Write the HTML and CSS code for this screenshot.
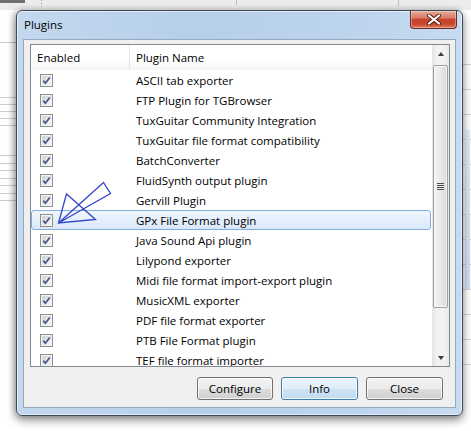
FILE: index.html
```html
<!DOCTYPE html>
<html lang="en">
<head>
    <meta charset="UTF-8">
    <meta name="viewport" content="width=device-width, initial-scale=1.0">
    <title>Plugins</title>
    <link rel="stylesheet" href="styles.css">
</head>
<body>
    <div class="dialog">
        <div class="titlebar">
            <span class="title">Plugins</span>
            <div class="close-btn">
                <svg width="16" height="11" viewBox="0 0 16 11">
                    <path d="M3 1.5 L13 9.5 M13 1.5 L3 9.5" stroke="#5a1c12" stroke-width="4" stroke-linecap="round"/>
                    <path d="M3 1.5 L13 9.5 M13 1.5 L3 9.5" stroke="#fff" stroke-width="2.2" stroke-linecap="round"/>
                </svg>
            </div>
        </div>
        <div class="client">
            <div class="list">
                <div class="list-body">
                    <div class="header">
                        <div class="col-enabled">Enabled</div>
                        <div class="col-name">Plugin Name</div>
                    </div>
                    <div class="rows" id="rows"></div>
                </div>
                <div class="scrollbar">
                    <div class="sb-btn"><span class="arrow-up"></span></div>
                    <div class="sb-track">
                        <div class="sb-thumb"><span class="grip"></span></div>
                    </div>
                    <div class="sb-btn"><span class="arrow-down"></span></div>
                </div>
            </div>
            <div class="buttons">
                <div class="btn btn-configure">Configure</div>
                <div class="btn btn-default">Info</div>
                <div class="btn">Close</div>
            </div>
        </div>
    </div>

    <!-- hand drawn arrow pointing at the GPx row -->
    <svg class="annotation" width="471" height="431" viewBox="0 0 471 431">
        <polygon points="58.5,223 103.5,182.5 110.5,193.5" fill="none" stroke="#3447c4" stroke-width="1.3"/>
        <polygon points="58.5,223 66.5,194 95.5,219.5" fill="none" stroke="#3447c4" stroke-width="1.3"/>
    </svg>

    <script>
        const plugins = [
            'ASCII tab exporter',
            'FTP Plugin for TGBrowser',
            'TuxGuitar Community Integration',
            'TuxGuitar file format compatibility',
            'BatchConverter',
            'FluidSynth output plugin',
            'Gervill Plugin',
            'GPx File Format plugin',
            'Java Sound Api plugin',
            'Lilypond exporter',
            'Midi file format import-export plugin',
            'MusicXML exporter',
            'PDF file format exporter',
            'PTB File Format plugin',
            'TEF file format importer'
        ];
        const selected = 'GPx File Format plugin';
        const rows = document.getElementById('rows');

        plugins.forEach((name) => {
            const row = document.createElement('div');
            row.className = 'row' + (name === selected ? ' selected' : '');
            row.innerHTML =
                '<div class="col-enabled"><span class="cb"><svg width="11" height="11" viewBox="0 0 11 11">' +
                '<path d="M2.3 5.6 L4.4 8.2 L8.8 2.4" fill="none" stroke="#46568a" stroke-width="1.7"/></svg></span></div>' +
                '<div class="col-name"></div>';
            row.querySelector('.col-name').textContent = name;
            rows.appendChild(row);
        });
    </script>
</body>
</html>
```

FILE: styles.css
```css
body {
    margin: 0;
    height: 431px;
    overflow: hidden;
    position: relative;
    font-family: 'Open Sans', 'Noto Sans', sans-serif;
    font-size: 11.5px;
    color: #000;
    background:
        linear-gradient(#6f6f6f, #6f6f6f) 0 0 / 25px 3px no-repeat,
        linear-gradient(#bdbdbd, #bdbdbd) 236px 0 / 1px 5px no-repeat,
        linear-gradient(#bdbdbd, #bdbdbd) 398px 0 / 1px 6px no-repeat,
        repeating-linear-gradient(to bottom, #9a9a9a 0 1px, transparent 1px 3px) 41px 0 / 1px 9px no-repeat,
        linear-gradient(#ececec, #ececec) 0 0 / 100% 10px no-repeat,
        linear-gradient(#c9c9c9, #c9c9c9) 0 42px / 16px 1px no-repeat,
        repeating-linear-gradient(to bottom, transparent 0 6px, #cdcdcd 6px 7px) 0 91px / 16px 36px no-repeat,
        repeating-linear-gradient(to bottom, transparent 0 6.5px, #cdcdcd 6.5px 7.5px) 0 149px / 16px 54px no-repeat,
        linear-gradient(#e3eef9, #cfe2f5) 465px 130px / 5px 160px no-repeat,
        repeating-linear-gradient(to bottom, transparent 0 24px, #d2d2d2 24px 25px) 463px 40px / 8px 340px no-repeat,
        #fff;
}

.dialog {
    margin: 10px 0 0 16px;
    width: 433px;
    height: 397px;
    border: 1px solid #3f4a57;
    border-radius: 6px;
    background: linear-gradient(to right, #c3d8ee, #b6cfea 40%, #bdd4ed 75%, #c7dbf0);
    box-shadow: inset 0 0 0 1px rgba(255, 255, 255, 0.55), 0 4px 10px rgba(0, 0, 0, 0.45), -2px 0 6px rgba(0, 0, 0, 0.2);
    padding: 0 6px 7px 6px;
    display: flex;
    flex-direction: column;
}

.titlebar {
    height: 28px;
    flex: none;
    display: flex;
    align-items: flex-start;
    justify-content: space-between;
    margin: 0 -6px;
    padding: 0 5px 0 7px;
}

.title {
    margin-top: 6px;
    font-size: 11.5px;
    color: #000;
}

.close-btn {
    width: 45px;
    height: 17px;
    border: 1px solid #6b2a20;
    border-top: none;
    border-radius: 0 0 4px 4px;
    background: linear-gradient(#e9aa9b, #d77c68 40%, #c4432c 50%, #c8452d 75%, #dc7a5d);
    box-shadow: inset 0 0 0 1px rgba(255, 255, 255, 0.35);
    display: flex;
    align-items: center;
    justify-content: center;
}

.client {
    flex: 1;
    background: #f0f0f0;
    border: 1px solid #98a8bd;
    padding: 4px 5px 0 6px;
    display: flex;
    flex-direction: column;
}

.list {
    height: 321px;
    flex: none;
    border: 1px solid #828790;
    background: #fff;
    display: flex;
    overflow: hidden;
}

.list-body {
    flex: 1;
    overflow: hidden;
}

.header {
    height: 25px;
    display: flex;
    background: linear-gradient(#fff 60%, #f3f4f6);
}

.header .col-enabled {
    border-right: 1px solid #e3e5e8;
}

.col-enabled {
    width: 99px;
    padding-left: 6px;
    box-sizing: border-box;
    display: flex;
    align-items: center;
}

.col-name {
    padding-left: 6px;
    display: flex;
    align-items: center;
    white-space: nowrap;
}

.row {
    height: 20px;
    display: flex;
    box-sizing: border-box;
    border: 1px solid transparent;
    margin-right: 1px;
}

.row .col-enabled {
    padding-left: 8px;
}

.row .col-name {
    padding-left: 5px;
}

.row.selected {
    border-color: #84acdd;
    border-radius: 3px;
    background: linear-gradient(#f1f7fe, #d8e8fa);
}

.cb {
    width: 11px;
    height: 11px;
    border: 1px solid #8e8f8f;
    background: linear-gradient(135deg, #cdcdcd, #eeeeee 70%, #f6f6f6);
    box-shadow: inset 0 0 0 1px #f4f4f4;
    display: block;
}

.cb svg {
    display: block;
}

.scrollbar {
    width: 17px;
    display: flex;
    flex-direction: column;
    background: linear-gradient(to right, #e3e3e3, #f2f2f2 30%, #f2f2f2 70%, #e8e8e8);
}

.sb-btn {
    height: 17px;
    display: flex;
    align-items: center;
    justify-content: center;
}

.arrow-up {
    border-left: 3.5px solid transparent;
    border-right: 3.5px solid transparent;
    border-bottom: 4px solid #3c3c3c;
}

.arrow-down {
    border-left: 3.5px solid transparent;
    border-right: 3.5px solid transparent;
    border-top: 4px solid #3c3c3c;
}

.sb-track {
    flex: 1;
    padding: 3px 1px 0 1px;
}

.sb-thumb {
    height: 243px;
    border: 1px solid #9b9fa5;
    border-radius: 2px;
    box-sizing: border-box;
    background: linear-gradient(to right, #f4f4f4, #e9e9e9 50%, #d9d9d9);
    box-shadow: inset 0 0 0 1px rgba(255, 255, 255, 0.7);
    display: flex;
    align-items: center;
    justify-content: center;
}

.grip {
    width: 7px;
    height: 7px;
    background: repeating-linear-gradient(to bottom, #4f4f4f 0 1px, #e8e8e8 1px 2px);
}

.buttons {
    display: flex;
    justify-content: flex-end;
    gap: 8px;
    margin: 10px 7px 0 0;
}

.btn {
    width: 75px;
    height: 21px;
    border: 1px solid #707070;
    border-radius: 3px;
    background: linear-gradient(#f2f2f2, #ebebeb 50%, #dddddd 51%, #cfcfcf);
    box-shadow: inset 0 0 0 1px rgba(255, 255, 255, 0.75);
    display: flex;
    align-items: center;
    justify-content: center;
    font-size: 11.5px;
}

.btn-configure {
    width: 74px;
}

.btn-default {
    border-color: #3c7fb1;
    background: linear-gradient(#eaf4fb, #e1eef8 50%, #cfe3f4 51%, #c2dbf0);
    box-shadow: inset 0 0 0 1px rgba(255, 255, 255, 0.8);
}

.annotation {
    position: absolute;
    left: 0;
    top: 0;
    pointer-events: none;
}
```
